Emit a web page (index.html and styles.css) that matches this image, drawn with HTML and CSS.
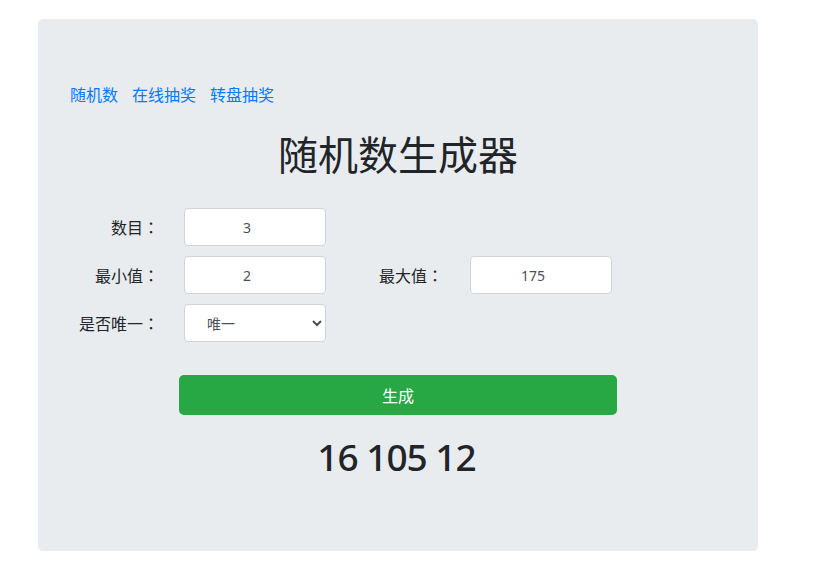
FILE: index.html
```html
<!DOCTYPE html>
<html lang="zh-CN">
<head>
<meta charset="UTF-8">
<meta name="viewport" content="width=device-width, initial-scale=1.0">
<title>随机数生成器</title>
<link rel="stylesheet" href="styles.css">
</head>
<body>
    <div class="jumbotron">
        <nav class="nav">
            <a href="#">随机数</a>
            <a href="#">在线抽奖</a>
            <a href="#">转盘抽奖</a>
        </nav>
        <h1>随机数生成器</h1>
        <div class="form-grid">
            <label class="label-first">数目<span class="colon">：</span></label>
            <input type="text" class="form-control" value="3">
            <span></span>
            <span></span>

            <label class="label-first">最小值<span class="colon">：</span></label>
            <input type="text" class="form-control" value="2">
            <label class="label-second">最大值<span class="colon">：</span></label>
            <input type="text" class="form-control" value="175">

            <label class="label-first">是否唯一<span class="colon">：</span></label>
            <select class="form-control form-select">
                <option>唯一</option>
                <option>不唯一</option>
            </select>
        </div>
        <button class="btn-generate">生成</button>
        <div class="result">16 105 12</div>
    </div>
</body>
</html>
```

FILE: styles.css
```css
body {
    margin: 0;
    padding: 0;
    background: #fff;
    color: #212529;
    font-family: "Noto Sans", "Noto Sans CJK SC", sans-serif;
    font-size: 16px;
}
.jumbotron {
    width: 720px;
    box-sizing: border-box;
    margin: 19px 0 0 38px;
    padding: 64px 32px 72px;
    background: #e9ecef;
    border-radius: 5px;
}
.nav {
    display: flex;
    gap: 14px;
    line-height: 24px;
}
.nav a {
    color: #007bff;
    text-decoration: none;
}
h1 {
    margin: 24px 0 0;
    font-size: 40px;
    font-weight: 400;
    line-height: 48px;
    text-align: center;
}
.form-grid {
    display: grid;
    grid-template-columns: 114px 142px 144px 142px;
    grid-auto-rows: 38px;
    row-gap: 10px;
    margin-top: 29px;
}
.form-grid label {
    display: flex;
    align-items: center;
    justify-content: flex-end;
}
.colon {
    font-family: "Noto Sans CJK JP", sans-serif;
}
.label-first {
    padding-right: 25px;
}
.label-second {
    padding-right: 27px;
}
.form-control {
    box-sizing: border-box;
    width: 142px;
    height: 38px;
    padding: 0 26px 0 10px;
    border: 1px solid #ced4da;
    border-radius: 4px;
    background: #fff;
    color: #495057;
    font-family: inherit;
    font-size: 14px;
    text-align: center;
    outline: none;
}
.form-select {
    text-align: left;
    padding: 0 8px 0 18px;
}
.btn-generate {
    display: block;
    width: 438px;
    height: 40px;
    margin: 33px auto 0;
    border: none;
    border-radius: 5px;
    background: #28a745;
    color: #fff;
    font-family: inherit;
    font-size: 16px;
    cursor: pointer;
}
.result {
    margin-top: 20px;
    padding-right: 3px;
    font-size: 37px;
    font-weight: 500;
    letter-spacing: -1px;
    line-height: 44px;
    text-align: center;
}
```
